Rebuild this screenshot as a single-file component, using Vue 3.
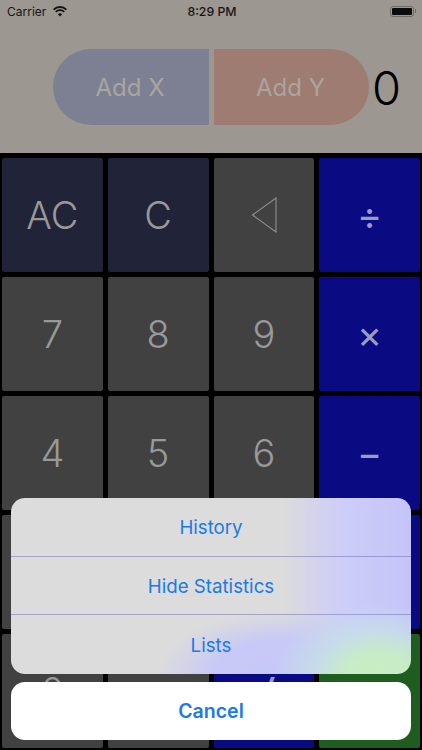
<script setup>
const rows = [
  [{ t: 'AC', c: 'navy' }, { t: 'C', c: 'navy' }, { t: '', c: 'gray', icon: true }, { t: '÷', c: 'blue', op: true }],
  [{ t: '7', c: 'gray' }, { t: '8', c: 'gray' }, { t: '9', c: 'gray' }, { t: '×', c: 'blue', op: true }],
  [{ t: '4', c: 'gray' }, { t: '5', c: 'gray' }, { t: '6', c: 'gray' }, { t: '−', c: 'blue', op: true }],
  [{ t: '', c: 'gray' }, { t: '', c: 'gray' }, { t: '', c: 'gray' }, { t: '', c: 'blue', op: true }],
  [{ t: '0', c: 'gray' }, { t: '.', c: 'gray' }, { t: '√', c: 'blue', op: true }, { t: '=', c: 'green', op: true }]
]
const keys = rows.flat()
const actions = ['History', 'Hide Statistics', 'Lists']
</script>

<template>
  <div class="screen">
    <header class="top">
      <div class="status">
        <div class="status-left">
          <span>Carrier</span>
          <svg class="wifi" viewBox="0 0 14 11" width="14" height="11">
            <path d="M7 10.500 4.900 8.200a3 3 0 0 1 4.200 0Z" fill="#111" />
            <path d="M3.300 6.500a5.400 5.400 0 0 1 7.400 0l1.200-1.300a7.200 7.200 0 0 0-9.800 0Z" fill="#111" />
            <path d="M1.200 4.200a8.400 8.400 0 0 1 11.600 0L14 2.900a10.200 10.200 0 0 0-14 0Z" fill="#111" />
          </svg>
        </div>
        <span class="time">8:29 PM</span>
        <div class="battery-wrap">
          <div class="battery"><div class="battery-fill"></div></div>
          <div class="nub"></div>
        </div>
      </div>
      <div class="adders">
        <div class="add add-x">Add X</div>
        <div class="add add-y">Add Y</div>
        <div class="count">0</div>
      </div>
    </header>
    <main class="pad">
      <div v-for="(k, i) in keys" :key="i" class="key" :class="[k.c, { op: k.op }]">
        <svg v-if="k.icon" viewBox="0 0 26 36" width="26" height="36">
          <path d="M25 1V35L1.500 18Z" fill="none" stroke="#8f8f8f" stroke-width="1.100" />
        </svg>
        <template v-else>{{ k.t }}</template>
      </div>
    </main>
    <div class="sheet">
      <div class="actions">
        <div v-for="a in actions" :key="a" class="action">{{ a }}</div>
      </div>
      <div class="cancel">Cancel</div>
    </div>
  </div>
</template>

<style scoped>
.screen {
  position: relative;
  width: 422px;
  height: 750px;
  overflow: hidden;
  background: #000;
  font-family: Inter, "Liberation Sans", sans-serif;
}
.top {
  height: 153px;
  background: #9c9790;
}
.status {
  height: 22px;
  padding: 0 6px 0 7px;
  display: flex;
  align-items: center;
  justify-content: space-between;
  font-size: 12px;
  color: #161616;
  position: relative;
}
.status-left {
  display: flex;
  align-items: center;
  gap: 7px;
}
.time {
  position: absolute;
  left: 0;
  right: 0;
  text-align: center;
  font-weight: 500;
  font-size: 12.300px;
  padding-left: 2px;
}
.battery-wrap {
  display: flex;
  align-items: center;
  gap: 1px;
}
.battery {
  width: 24px;
  height: 11px;
  border: 1px solid #6f6c67;
  border-radius: 3px;
  padding: 1px;
  box-sizing: border-box;
}
.battery-fill {
  height: 100%;
  background: #0c0c0c;
  border-radius: 1px;
}
.nub {
  width: 1px;
  height: 4px;
  background: #6f6c67;
}
.adders {
  display: flex;
  margin-top: 27px;
  padding-left: 53px;
  align-items: center;
}
.add {
  height: 76px;
  display: flex;
  align-items: center;
  justify-content: center;
  font-size: 24px;
  color: #aaa59f;
  box-sizing: border-box;
  padding-right: 2px;
}
.add-x {
  width: 156px;
  background: #7c8092;
  border-radius: 38px 0 0 38px;
}
.add-y {
  width: 155px;
  background: #9e7c71;
  border-radius: 0 38px 38px 0;
  margin-left: 5px;
}
.count {
  margin-left: 3px;
  font-size: 47px;
  font-weight: 300;
  color: #000;
}
.pad {
  display: grid;
  grid-template-columns: repeat(4, 1fr);
  grid-template-rows: repeat(5, 114px);
  gap: 5px;
  padding: 5px 2px 0;
}
.key {
  border-radius: 2px;
  display: flex;
  align-items: center;
  justify-content: center;
  font-size: 38px;
  font-weight: 350;
  color: #999;
}
.gray { background: #414141; }
.navy { background: #212338; }
.blue { background: #0a0a82; }
.green { background: #1f5c1f; }
.op { font-size: 38px; font-weight: 400; color: #9a9ac4; }
.sheet {
  position: absolute;
  left: 11px;
  right: 11px;
  top: 498px;
  display: flex;
  flex-direction: column;
  gap: 8.500px;
}
.actions {
  border-radius: 14px;
  overflow: hidden;
  background:
    radial-gradient(ellipse 105px 70px at 92% 100%, #c8eec4 0, #c8ecc6 30%, rgba(198, 222, 232, 0.85) 62%, rgba(196, 200, 248, 0) 100%),
    radial-gradient(ellipse 125px 62px at 68% 100%, #c6c8f8 0, #c8c9f6 55%, rgba(200, 201, 246, 0) 100%),
    linear-gradient(90deg, #dcdcdc 0, #dcdcdc 68%, #d4d4ea 75%, #cdcdf9 83%, #c4c4f8 100%);
}
.action {
  height: 58.500px;
  padding-top: 2px;
  display: flex;
  align-items: center;
  justify-content: center;
  font-size: 18.700px;
  color: #1a7ae6;
  box-sizing: border-box;
  border-bottom: 1px solid rgba(110, 110, 170, 0.5);
}
.action:last-child { border-bottom: 0; }
.cancel {
  height: 58px;
  border-radius: 14px;
  background: #fff;
  display: flex;
  align-items: center;
  justify-content: center;
  font-size: 19.500px;
  font-weight: 600;
  color: #1a7ae6;
}
</style>
